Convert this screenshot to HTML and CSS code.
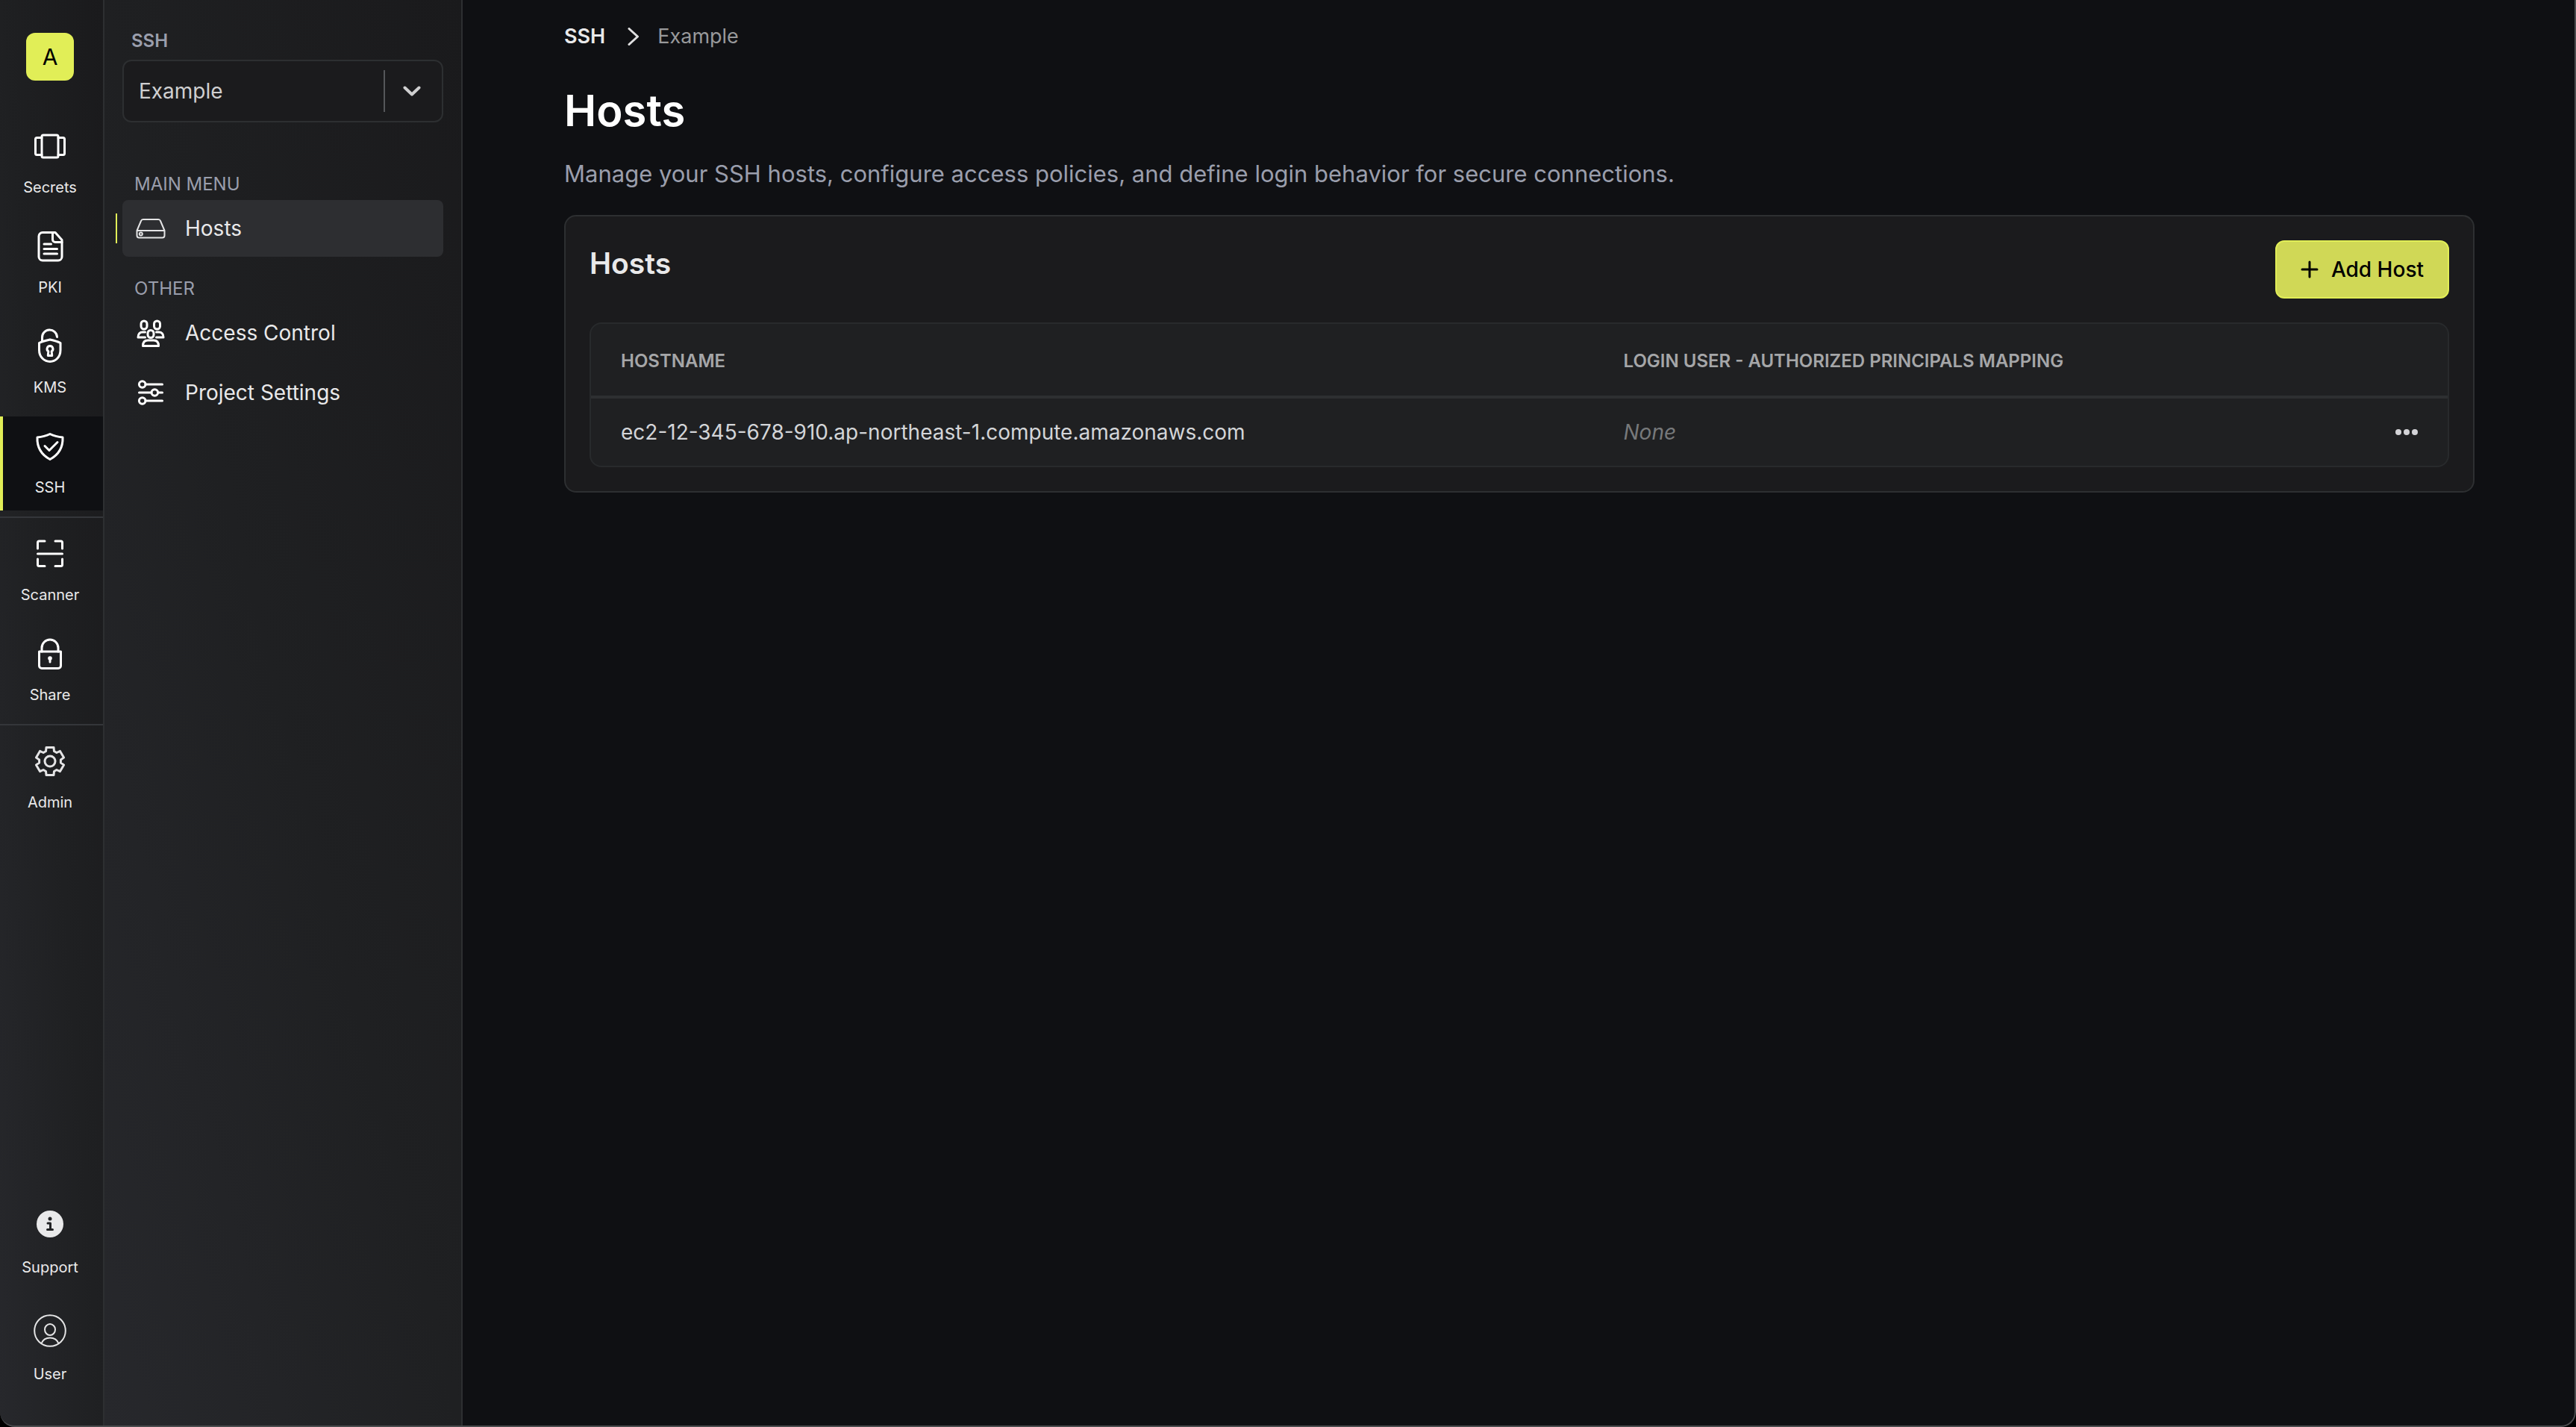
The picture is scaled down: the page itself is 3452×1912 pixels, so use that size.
FILE: index.html
```html
<!DOCTYPE html>
<html lang="en">
<head>
<meta charset="utf-8">
<meta name="viewport" content="width=device-width, initial-scale=1">
<title>SSH Hosts</title>
<link rel="stylesheet" href="styles.css">
</head>
<body>
<div class="app">
  <nav class="rail" aria-label="Products">
    <a class="rail__brand" href="#org">A</a>
    <a class="rail__item" href="#secrets">
      <svg class="icon-lg" viewBox="0 0 48 48"><rect x="13" y="9" width="22" height="30" rx="2"/><path d="M13 12.500H6.500a2 2 0 0 0-2 2v19a2 2 0 0 0 2 2H13M35 12.500h6.500a2 2 0 0 1 2 2v19a2 2 0 0 1-2 2H35"/></svg>
      <span>Secrets</span>
    </a>
    <a class="rail__item" href="#pki">
      <svg class="icon-lg" viewBox="0 0 48 48"><path d="M14 5.500h17l9 10V38a5 5 0 0 1-5 5H14a5 5 0 0 1-5-5V10.500a5 5 0 0 1 5-5z"/><path d="M27.500 5.500V15a3.500 3.500 0 0 0 3.500 3.500h9M16 21h9.500M16 27.500h17.500M16 34h17.500"/></svg>
      <span>PKI</span>
    </a>
    <a class="rail__item" href="#kms">
      <svg class="icon-lg" viewBox="0 0 48 48"><path d="M24 15c4.500 1 9 2 14 4.500V29c0 9.500-6.500 15.500-14 15.500S9.500 38.500 9.500 29v-9.500C14.500 17 19.500 16 24 15z"/><path d="M13.500 17v-4.500a10 10 0 0 1 20-1"/><path d="M24 23.500a4 4 0 0 0-2.200 7.300L21.300 36.500h5.400l-.5-5.700A4 4 0 0 0 24 23.500z"/></svg>
      <span>KMS</span>
    </a>
    <a class="rail__item rail__item--active" href="#ssh" aria-current="page">
      <svg class="icon-lg" viewBox="0 0 48 48"><path d="M24 7.500c5 2.500 11 4 17 4.500.5 12-5 23-17 29.500C12 35 6.500 24 7 12c6-.5 12-2 17-4.500z"/><path d="M17 23.500l6 6 11-11"/></svg>
      <span>SSH</span>
    </a>
    <hr class="rail__rule">
    <a class="rail__item" href="#scanner">
      <svg class="icon-lg" viewBox="0 0 48 48"><path d="M7.500 17V9a2 2 0 0 1 2-2H17M31 7h7.500a2 2 0 0 1 2 2v8M40.500 31v7.500a2 2 0 0 1-2 2H31M17 40.500H9.500a2 2 0 0 1-2-2V31M7.500 24h33"/></svg>
      <span>Scanner</span>
    </a>
    <a class="rail__item" href="#share">
      <svg class="icon-lg" viewBox="0 0 48 48"><path d="M9.500 21h29v19a3.500 3.500 0 0 1-3.500 3.500H13A3.500 3.500 0 0 1 9.500 40z"/><path d="M13 21v-5a11 11 0 0 1 22 0v5"/><circle class="fill" cx="24" cy="30" r="2.800"/><path d="M24 30v5"/></svg>
      <span>Share</span>
    </a>
    <hr class="rail__rule">
    <a class="rail__item" href="#admin">
      <svg class="icon-lg icon-dim" viewBox="-24 -24 48 48"><path d="M-5-18.500H5L5.500-13.500 8.900-11.500 13.500-13.600 18.500-4.900 14.400-2V2L18.500 4.900 13.500 13.600 8.900 11.500 5.500 13.500 5 18.500H-5L-5.500 13.500-8.900 11.500-13.500 13.600-18.500 4.900-14.400 2V-2L-18.500-4.900-13.500-13.600-8.900-11.500-5.500-13.500z"/><circle r="7"/></svg>
      <span>Admin</span>
    </a>
    <div class="rail__foot">
      <a class="rail__item rail__item--foot" href="#support">
        <svg class="icon-lg" viewBox="0 0 48 48"><circle class="info-disc" cx="24" cy="24" r="18"/><circle class="info-dot" cx="24" cy="17" r="2.500"/><path class="info-stem" d="M21 23h3.500v8M20.500 31.500h7"/></svg>
        <span>Support</span>
      </a>
      <a class="rail__item rail__item--foot" href="#user">
        <svg class="icon-lg icon-thin" viewBox="0 0 48 48"><circle cx="24" cy="24" r="20.800"/><ellipse cx="24" cy="22.500" rx="7" ry="7.500"/><path d="M12.500 41c2-5 6.500-7.500 11.500-7.500S33.500 36 35.500 41"/></svg>
        <span>User</span>
      </a>
    </div>
  </nav>

  <aside class="sidebar">
    <label class="sidebar__label" for="project">SSH</label>
    <div class="picker">
      <select class="picker__select" id="project"><option>Example</option></select>
      <span class="picker__mark"><svg class="picker__chevron" viewBox="0 0 24 24"><path d="M2.500 7.500l9.500 9 9.500-9"/></svg></span>
    </div>
    <h2 class="sidebar__group">MAIN MENU</h2>
    <a class="menu menu--active" href="#hosts">
      <svg class="icon-md icon-thin" viewBox="0 0 40 40"><path d="M1.500 23L7 10a3 3 0 0 1 2.800-2h20.400A3 3 0 0 1 33 10l5.500 13v6.500a3 3 0 0 1-3 3h-31a3 3 0 0 1-3-3zM1.500 23h37"/><circle cx="6.800" cy="27.600" r="2"/></svg>
      <span>Hosts</span>
    </a>
    <h2 class="sidebar__group sidebar__group--next">OTHER</h2>
    <a class="menu" href="#access">
      <svg class="icon-md" viewBox="0 0 40 40"><rect x="7" y="4" width="8" height="11" rx="4"/><rect x="24.500" y="4" width="8" height="11" rx="4"/><rect x="16" y="16.500" width="8" height="10" rx="4"/><path d="M12.500 26H3c0-4.500 2.500-7 6-7h3.500M27.500 26h9.500c0-4.500-2.500-7-6-7h-3.500M9.500 37.500c0-5 2.500-7.500 6.500-7.500h8c4 0 6.500 2.500 6.500 7.500z"/></svg>
      <span>Access Control</span>
    </a>
    <a class="menu" href="#settings">
      <svg class="icon-md" viewBox="0 0 40 40"><circle cx="8.700" cy="9" r="4.300"/><circle cx="25.300" cy="20" r="4.300"/><circle cx="8.700" cy="31" r="4.300"/><path d="M13 9h22.500M4.500 20H21M29.600 20h5.900M13 31h22.500"/></svg>
      <span>Project Settings</span>
    </a>
  </aside>

  <main class="main">
    <div class="page">
      <nav class="crumbs" aria-label="Breadcrumb">
        <a class="crumbs__link" href="#ssh">SSH</a>
        <svg class="crumbs__sep" viewBox="0 0 16 24"><path d="M2 1.500L13.500 12 2 22.500"/></svg>
        <span class="crumbs__here">Example</span>
      </nav>
      <h1 class="page__title">Hosts</h1>
      <p class="page__lead">Manage your SSH hosts, configure access policies, and define login behavior for secure connections.</p>
      <section class="card">
        <header class="card__head">
          <h2 class="card__title">Hosts</h2>
          <button class="add" type="button">
            <svg class="add__plus" viewBox="0 0 24 24"><path d="M12 2v20M2 12h20"/></svg>
            <span>Add Host</span>
          </button>
        </header>
        <div class="table-box">
          <table class="hosts">
            <thead>
              <tr>
                <th class="hosts__name" scope="col">HOSTNAME</th>
                <th scope="col">LOGIN USER - AUTHORIZED PRINCIPALS MAPPING</th>
                <th class="hosts__tools"></th>
              </tr>
            </thead>
            <tbody>
              <tr>
                <td>ec2-12-345-678-910.ap-northeast-1.compute.amazonaws.com</td>
                <td><em class="hosts__none">None</em></td>
                <td class="hosts__tools">
                  <button class="more" type="button" aria-label="More options">
                    <svg class="more__dots" viewBox="0 0 30 10"><circle cx="4" cy="5" r="4"/><circle cx="15" cy="5" r="4"/><circle cx="26" cy="5" r="4"/></svg>
                  </button>
                </td>
              </tr>
            </tbody>
          </table>
        </div>
      </section>
    </div>
  </main>
</div>
</body>
</html>
```

FILE: styles.css
```css
:root {
  --bg: #0f1013;
  --card: #1b1b1d;
  --panel: #1f2022;
  --line: #2d2f31;
  --yellow: #e1ee57;
  --text: #e9e9ea;
  --muted: #9a9eac;
}

* { box-sizing: border-box; }

body {
  margin: 0;
  background: #000;
  color: var(--text);
  font-family: Inter, "Liberation Sans", sans-serif;
  font-size: 28px;
  line-height: 40px;
}

a { color: inherit; text-decoration: none; }
h1, h2, p { margin: 0; }
button, select { font: inherit; color: inherit; cursor: pointer; }

svg {
  display: block;
  flex: none;
  fill: none;
  stroke: #fff;
  stroke-width: 3;
  stroke-linecap: round;
  stroke-linejoin: round;
}

.app {
  position: relative;
  display: flex;
  min-height: 100vh;
  overflow: hidden;
  border-radius: 0 0 20px 20px;
  background: var(--bg);
}

/* Window edge, drawn over the content */
.app::after {
  content: "";
  position: absolute;
  inset: 0;
  border: solid #4b4c4e;
  border-width: 0 2px 2px 0;
  border-radius: 0 0 20px 20px;
  pointer-events: none;
}

.icon-lg { width: 48px; height: 48px; }
.icon-md { width: 40px; height: 40px; }
.icon-thin { stroke-width: 2; stroke: #e4e4e5; }
.icon-dim { stroke: #e4e4e5; }
.fill { fill: #fff; stroke: none; }
.info-disc { fill: #e9e9ea; stroke: none; }
.info-dot { fill: #222325; stroke: none; }
.info-stem { stroke: #222325; }

/* Product rail */
.rail {
  display: flex;
  flex-direction: column;
  flex: none;
  gap: 8px;
  width: 140px;
  padding: 44px 0 40px;
  border-right: 2px solid var(--line);
  background: linear-gradient(to top right, #27282c, #1f2022, #1a1a1c);
}

.rail__brand {
  display: flex;
  align-items: center;
  justify-content: center;
  width: 64px;
  height: 64px;
  margin: 0 0 40px 35px;
  border-radius: 12px;
  background: var(--yellow);
  color: #000;
  font-size: 30px;
}

.rail__item {
  display: flex;
  flex-direction: column;
  align-items: center;
  gap: 17px;
  padding: 16px 4px 17px 0;
  font-size: 20px;
  line-height: 28px;
}

.rail__item--active {
  background: var(--bg);
  box-shadow: inset 4px 0 var(--yellow);
}

.rail__item--foot { gap: 20px; }

.rail__rule {
  width: 100%;
  height: 2px;
  margin: 0;
  border: 0;
  background: #34363a;
}

.rail__foot {
  display: flex;
  flex-direction: column;
  gap: 14px;
  margin-top: auto;
}

/* Project sidebar */
.sidebar {
  flex: none;
  width: 480px;
  padding: 32px 24px;
  border-right: 2px solid var(--line);
  background: linear-gradient(to top right, #27282c, #1f2022, #1a1a1c);
}

.sidebar__label,
.sidebar__group {
  display: block;
  color: var(--muted);
  font-size: 24px;
  line-height: 36px;
}

.sidebar__label {
  padding: 5px 12px 0;
  margin-bottom: 7px;
  font-weight: 600;
}

.sidebar__group {
  margin: 65px 0 3px;
  padding: 0 16px;
  font-weight: 400;
}

.sidebar__group--next { margin-top: 25px; }

.picker {
  display: grid;
  grid-template-columns: 1fr 80px;
  width: 430px;
  height: 84px;
}

.picker__select {
  grid-area: 1 / 1 / 2 / 3;
  appearance: none;
  padding: 0 20px;
  border: 2px solid var(--line);
  border-radius: 12px;
  background: var(--card);
  color: #cfcfd0;
}

.picker__mark {
  grid-area: 1 / 2;
  display: flex;
  align-items: center;
  align-self: center;
  height: 56px;
  padding-left: 24px;
  border-left: 2px solid #55575a;
  pointer-events: none;
}

.picker__chevron {
  width: 24px;
  height: 24px;
  stroke: #cfcfd0;
  stroke-width: 4;
}

.menu {
  position: relative;
  display: flex;
  align-items: center;
  gap: 26px;
  width: 430px;
  height: 76px;
  margin-bottom: 4px;
  padding-left: 18px;
  border-radius: 8px;
}

.menu--active { margin-bottom: 0; background: #2d2e31; }

.menu--active::before {
  content: "";
  position: absolute;
  left: -9px;
  top: 18px;
  width: 2px;
  height: 40px;
  background: var(--yellow);
}

/* Page */
.main { flex: 1; min-width: 0; padding: 29px 40px; }
.page { max-width: 2560px; margin: 0 auto; }

.crumbs { display: flex; align-items: center; font-size: 27px; }
.crumbs__link { font-weight: 600; }
.crumbs__sep {
  width: 16px;
  height: 24px;
  margin: 0 24px 0 30px;
  stroke: #e0e0e1;
}
.crumbs__here { color: #98999b; }

.page__title {
  margin-top: 43px;
  color: #fff;
  font-size: 58px;
  font-weight: 600;
  line-height: 72px;
}

.page__lead {
  margin-top: 25px;
  color: var(--muted);
  font-size: 31px;
  line-height: 48px;
}

.card {
  margin-top: 31px;
  padding: 32px;
  border: 2px solid var(--line);
  border-radius: 16px;
  background: var(--card);
}

.card__head {
  display: flex;
  align-items: flex-start;
  justify-content: space-between;
  margin-bottom: 32px;
}

.card__title { font-size: 39px; font-weight: 600; line-height: 62px; }

.add {
  display: flex;
  align-items: center;
  gap: 17px;
  height: 78px;
  padding: 0 32px;
  border: 2px solid #e1ee57;
  border-radius: 12px;
  background: #d0d856;
  color: #000;
  font-weight: 500;
}

.add__plus { width: 24px; height: 24px; stroke: #000; }

.table-box {
  overflow: hidden;
  border: 2px solid #282a2c;
  border-radius: 16px;
  background: var(--panel);
}

.hosts {
  width: 100%;
  table-layout: fixed;
  border-spacing: 0;
  text-align: left;
}

.hosts th {
  height: 100px;
  padding: 4px 40px 0;
  border-bottom: 4px solid var(--line);
  color: #a5a6a8;
  font-size: 24px;
  font-weight: 600;
}

.hosts td { height: 90px; padding: 0 40px; color: #d3d5d8; }
.hosts .hosts__name { width: 54%; }
.hosts .hosts__tools { width: 110px; }
.hosts__none { color: #77797b; }

.more { display: block; padding: 0; border: 0; background: none; }
.more__dots { width: 30px; height: 10px; fill: #d3d3d7; stroke: none; }
```
